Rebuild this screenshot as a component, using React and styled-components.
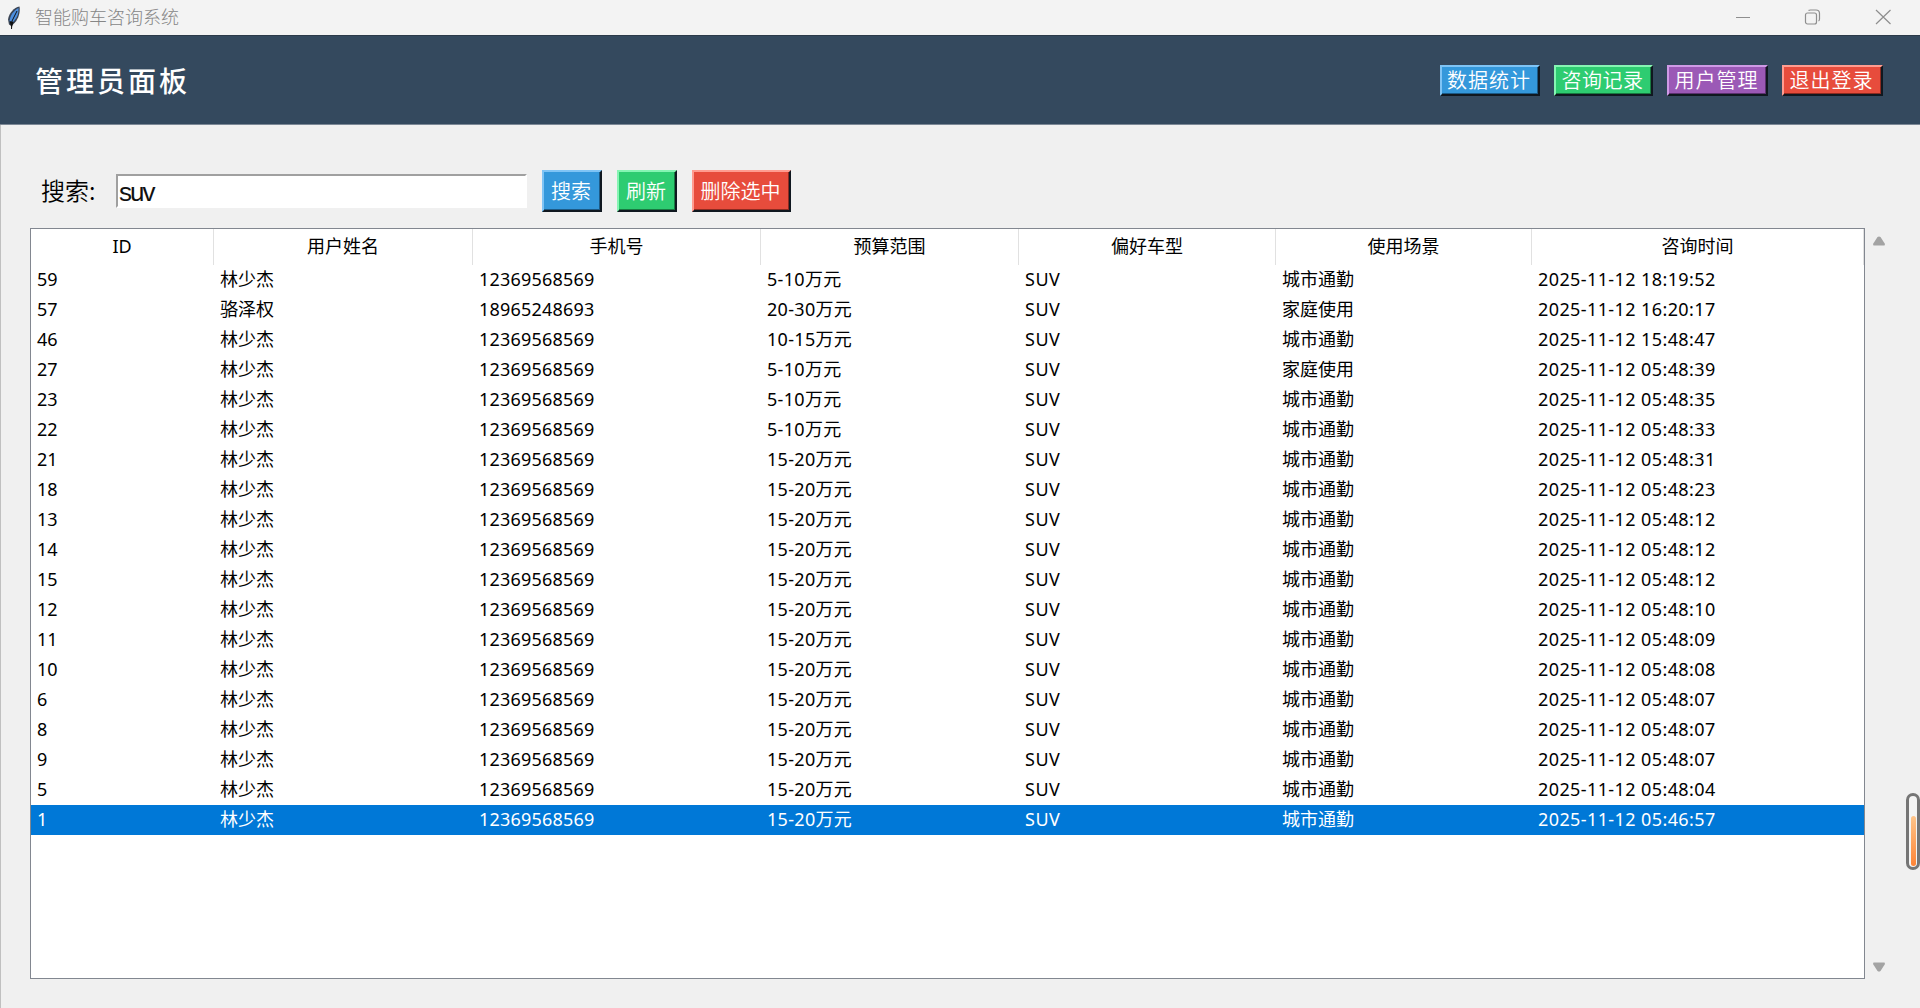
import React from "react";
import styled, { createGlobalStyle } from "styled-components";

const GlobalStyle = createGlobalStyle`
  * {
    box-sizing: border-box;
  }
  body {
    margin: 0;
    overflow: hidden;
    background: #f0f0f0;
    font-family: "Noto Sans", "Noto Sans CJK SC", sans-serif;
  }
`;

const Window = styled.div`
  display: flex;
  flex-direction: column;
  width: 1920px;
  height: 1008px;
  background: #f0f0f0;
`;

const TitleBar = styled.div`
  display: flex;
  align-items: center;
  height: 35px;
  padding: 0 15px 0 6px;
  background: #f3f3f3;
  color: #868686;
`;

const TitleText = styled.span`
  flex: 1;
  margin: 0 0 3px 11px;
  font-family: "Noto Sans CJK SC", sans-serif;
  font-size: 18px;
  font-weight: 300;
  line-height: 32px;
`;

const WindowButtons = styled.div`
  display: flex;
  align-items: center;
  gap: 54px;
  margin: 0 13px 2px 0;
`;

const Client = styled.div`
  flex: 1;
  display: flex;
  flex-direction: column;
  border-left: 1px solid #c0c0c0;
`;

const Header = styled.header`
  display: flex;
  align-items: center;
  justify-content: space-between;
  height: 90px;
  margin-left: -1px;
  padding: 0 37px 0 35px;
  background: #34495e;
  border-top: 1px solid #2b3a49;
  border-bottom: 1px solid #7c8896;
`;

const Heading = styled.h1`
  margin: 0;
  color: #fff;
  font-family: "Noto Sans CJK SC", sans-serif;
  font-size: 28px;
  font-weight: 500;
  letter-spacing: 3px;
  line-height: 40px;
`;

const HeaderActions = styled.div`
  display: flex;
  gap: 14px;
`;

const tones = {
  blue: { base: "#3498db", light: "#7fc4f5", dark: "#1c5a86" },
  green: { base: "#2ecc71", light: "#86f5b3", dark: "#187a41" },
  purple: { base: "#9b59b6", light: "#cf9ae6", dark: "#5c3170" },
  red: { base: "#e74c3c", light: "#ff9c90", dark: "#8c2a20" }
};

const RaisedButton = styled.button`
  width: ${props => props.$width}px;
  height: ${props => props.$height}px;
  padding: 0 2px 0 0;
  border: 2px solid;
  border-color: ${props => tones[props.$tone].light} #101820 #101820
    ${props => tones[props.$tone].light};
  box-shadow: inset -1px -1px 0 ${props => tones[props.$tone].dark};
  background: ${props => tones[props.$tone].base};
  color: #fff;
  font-family: "Noto Sans CJK SC", sans-serif;
  font-size: 20px;
  font-weight: 350;
  letter-spacing: ${props => props.$spacing || 0}px;
  line-height: 24px;
  white-space: nowrap;
`;

const Toolbar = styled.div`
  display: flex;
  align-items: center;
  height: 42px;
  margin: 45px 0 0 40px;
`;

const SearchLabel = styled.label`
  width: 75px;
  margin-bottom: 2px;
  font-family: "Noto Sans CJK SC", sans-serif;
  font-size: 24px;
  font-weight: 350;
  line-height: 30px;
`;

const SearchInput = styled.input`
  width: 411px;
  height: 34px;
  margin-right: 15px;
  padding: 2px 0 0 1px;
  border: 2px solid;
  border-color: #a0a0a0 #fff #fff #a0a0a0;
  background: #fff;
  color: #111;
  font-family: "Liberation Sans", sans-serif;
  font-size: 26px;
  letter-spacing: -2px;
  outline: none;
`;

const ToolbarButtons = styled.div`
  display: flex;
  gap: 15px;
`;

const Content = styled.div`
  display: flex;
  margin: 16px 0 0 29px;
`;

const Table = styled.div`
  width: 1835px;
  height: 751px;
  border: 1px solid #828790;
  background: #fff;
  color: #000;
  font-size: 18px;
`;

const Row = styled.div`
  display: grid;
  grid-template-columns: 183px 259px 288px 258px 257px 256px 1fr;
  height: 30px;
  line-height: 29px;
  background: ${props => (props.$selected ? "#0078d7" : "transparent")};
  color: ${props => (props.$selected ? "#fff" : "#000")};
`;

const HeadRow = styled(Row)`
  height: 36px;
  line-height: 34px;
`;

const HeadCell = styled.div`
  border-right: 1px solid #e1e1e1;
  text-align: center;
`;

const Cell = styled.div`
  padding-left: 6px;
  letter-spacing: ${props => props.$spacing || 0}px;
  white-space: nowrap;
`;

const ScrollTrack = styled.div`
  display: flex;
  flex-direction: column;
  justify-content: space-between;
  padding: 8px 0 7px 7px;
`;

const Gauge = styled.div`
  position: absolute;
  left: 1906px;
  top: 793px;
  display: flex;
  align-items: flex-end;
  width: 14px;
  height: 77px;
  padding: 1px 1px 1px 2px;
  border: 3px solid #757575;
  border-radius: 7px;
  background: #f4f4f4;
`;

const GaugeFill = styled.div`
  width: 100%;
  height: 50px;
  border-radius: 3px;
  background: linear-gradient(#ffc58a, #ff8436);
`;

const columns = [
  "ID",
  "用户姓名",
  "手机号",
  "预算范围",
  "偏好车型",
  "使用场景",
  "咨询时间"
];

const spacings = [0, 0, 0.2, 0.3, 0.5, 0, 0.4];

const makeRecord = (id, time, budget = "15-20万元", extra = {}) => ({
  id,
  name: "林少杰",
  phone: "12369568569",
  budget,
  model: "SUV",
  scene: "城市通勤",
  time: `2025-11-12 ${time}`,
  ...extra
});

const records = [
  makeRecord(59, "18:19:52", "5-10万元"),
  makeRecord(57, "16:20:17", "20-30万元", {
    name: "骆泽权",
    phone: "18965248693",
    scene: "家庭使用"
  }),
  makeRecord(46, "15:48:47", "10-15万元"),
  makeRecord(27, "05:48:39", "5-10万元", { scene: "家庭使用" }),
  makeRecord(23, "05:48:35", "5-10万元"),
  makeRecord(22, "05:48:33", "5-10万元"),
  makeRecord(21, "05:48:31"),
  makeRecord(18, "05:48:23"),
  makeRecord(13, "05:48:12"),
  makeRecord(14, "05:48:12"),
  makeRecord(15, "05:48:12"),
  makeRecord(12, "05:48:10"),
  makeRecord(11, "05:48:09"),
  makeRecord(10, "05:48:08"),
  makeRecord(6, "05:48:07"),
  makeRecord(8, "05:48:07"),
  makeRecord(9, "05:48:07"),
  makeRecord(5, "05:48:04"),
  makeRecord(1, "05:46:57")
];

const selectedId = 1;

const FeatherIcon = () => (
  <svg width="18" height="26" viewBox="0 0 18 26">
    <path
      d="M13.500 1.500C8 2.500 3 8 2 14.500L3 19.500L5.500 21L9 17.500C12.500 13.500 14.500 7 13.500 1.500Z"
      fill="#3b4555"
    />
    <path
      d="M12.500 3C8 5.500 4 10 3.500 16.500L5.500 18.500L8 16C11.500 12 12.800 8 12.500 3Z"
      fill="#4d8fe0"
    />
    <path d="M11 6L6 16L5.500 24" fill="none" stroke="#111" strokeWidth="1" />
    <path d="M3.500 16L5.500 23L7.500 17Z" fill="#111" />
  </svg>
);

const MinimizeIcon = () => (
  <svg width="17" height="16" viewBox="0 0 17 16">
    <path d="M3 8.500H18" stroke="#8e8e8e" />
  </svg>
);

const RestoreIcon = () => (
  <svg width="17" height="16" viewBox="0 0 17 16">
    <g fill="none" stroke="#8e8e8e" strokeWidth="1.2">
      <rect x="1.500" y="4" width="11" height="11" rx="2" />
      <path d="M4.500 1.500C5 1 5.500 1 6.500 1H12Q15.500 1 15.500 4.500V10Q15.500 11.500 14.500 12" />
    </g>
  </svg>
);

const CloseIcon = () => (
  <svg width="17" height="16" viewBox="0 0 17 16">
    <path d="M1 1L15.500 15M15.500 1L1 15" stroke="#8e8e8e" strokeWidth="1.2" />
  </svg>
);

const ScrollArrow = ({ down }) => (
  <svg width="14" height="10" viewBox="0 0 14 10">
    <path
      d={
        down
          ? "M1.500 0.500H12.500L13 2L8.500 9Q7 10 5.500 9L1 2Z"
          : "M1.500 9.500H12.500L13 8L8.500 1Q7 0 5.500 1L1 8Z"
      }
      fill="#a3a3a3"
    />
  </svg>
);

const RecordsTable = () => (
  <Table>
    <HeadRow>
      {columns.map(title => (
        <HeadCell key={title}>{title}</HeadCell>
      ))}
    </HeadRow>
    {records.map(record => (
      <Row key={record.id} $selected={record.id === selectedId}>
        {Object.values(record).map((value, i) => (
          <Cell key={columns[i]} $spacing={spacings[i]}>
            {value}
          </Cell>
        ))}
      </Row>
    ))}
  </Table>
);

const App = () => (
  <Window>
    <GlobalStyle />
    <TitleBar>
      <FeatherIcon />
      <TitleText>智能购车咨询系统</TitleText>
      <WindowButtons>
        <MinimizeIcon />
        <RestoreIcon />
        <CloseIcon />
      </WindowButtons>
    </TitleBar>
    <Client>
      <Header>
        <Heading>管理员面板</Heading>
        <HeaderActions>
          <RaisedButton $tone="blue" $width={100} $height={31} $spacing={1}>
            数据统计
          </RaisedButton>
          <RaisedButton $tone="green" $width={99} $height={31} $spacing={0.5}>
            咨询记录
          </RaisedButton>
          <RaisedButton $tone="purple" $width={101} $height={31} $spacing={1}>
            用户管理
          </RaisedButton>
          <RaisedButton $tone="red" $width={101} $height={31} $spacing={1}>
            退出登录
          </RaisedButton>
        </HeaderActions>
      </Header>
      <Toolbar>
        <SearchLabel>搜索:</SearchLabel>
        <SearchInput defaultValue="suv" />
        <ToolbarButtons>
          <RaisedButton $tone="blue" $width={60} $height={42}>
            搜索
          </RaisedButton>
          <RaisedButton $tone="green" $width={60} $height={42}>
            刷新
          </RaisedButton>
          <RaisedButton $tone="red" $width={99} $height={42}>
            删除选中
          </RaisedButton>
        </ToolbarButtons>
      </Toolbar>
      <Content>
        <RecordsTable />
        <ScrollTrack>
          <ScrollArrow />
          <ScrollArrow down />
        </ScrollTrack>
      </Content>
    </Client>
    <Gauge>
      <GaugeFill />
    </Gauge>
  </Window>
);

export default App;
